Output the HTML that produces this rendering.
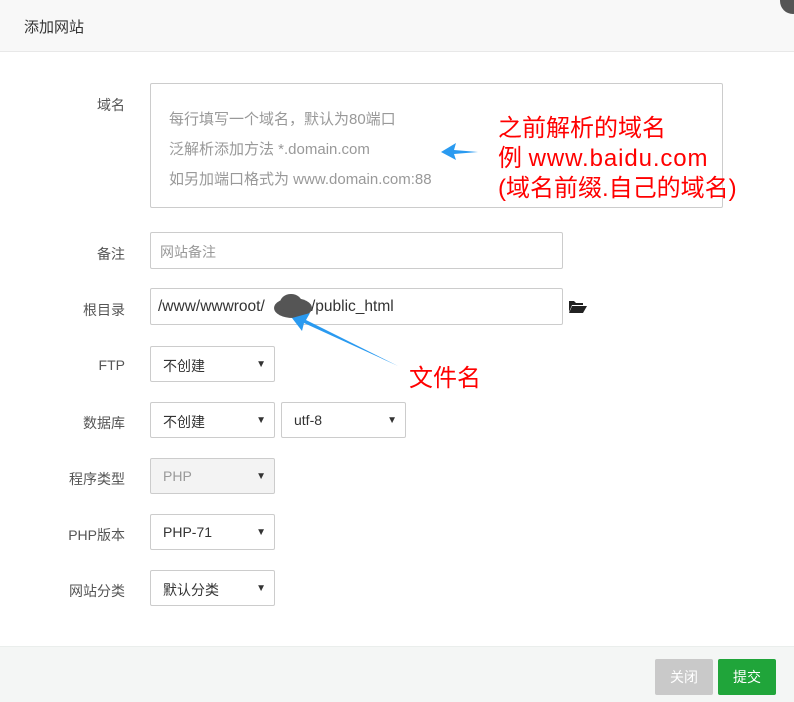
<!DOCTYPE html>
<html><head><meta charset="utf-8"><style>
*{box-sizing:border-box;margin:0;padding:0}
body{width:794px;height:702px;background:#fff;font-family:"Liberation Sans","Noto Sans CJK SC",sans-serif;position:relative;overflow:hidden;color:#333}
.hdr{position:absolute;left:0;top:0;width:794px;height:52px;background:#f8f8f8;border-bottom:1px solid #e8e8e8}
.hdr span{position:absolute;left:24px;top:16px;font-size:15px;color:#333}
.lbl{position:absolute;right:669px;font-size:14px;color:#555;text-align:right}
.box{position:absolute;border:1px solid #ccc;border-radius:2px;background:#fff;font-size:14px}
.sel{position:absolute;border:1px solid #ccc;border-radius:2px;background:#fff;font-size:14px;width:125px;height:36px;padding:9px 12px;color:#333}
.sel:after{content:"▼";position:absolute;right:8px;top:12px;font-size:10px;color:#333}
.ph{color:#999;font-size:15px;position:absolute;left:18px}
.red{position:absolute;color:#f00;font-size:24px;line-height:30px;white-space:nowrap}
.ftr{position:absolute;left:0;top:646px;width:794px;height:56px;background:#f4f6f5;border-top:1px solid #eaeeec}
.btn{position:absolute;top:12px;height:36px;width:58px;border-radius:2px;color:#fff;font-size:14px;text-align:center;line-height:36px}
</style></head><body>
<div class="hdr"><span>添加网站</span></div>
<div style="position:absolute;left:780px;top:-12px;width:26px;height:26px;border-radius:50%;background:#555"></div>

<div class="lbl" style="top:95px">域名</div>
<div class="box" style="left:150px;top:83px;width:573px;height:125px">
<div class="ph" style="top:24px">每行填写一个域名，默认为80端口</div>
<div class="ph" style="top:54px">泛解析添加方法 *.domain.com</div>
<div class="ph" style="top:84px">如另加端口格式为 www.domain.com:88</div>
</div>
<div class="red" style="left:498px;top:114px">之前解析的域名<br>例 <span style="letter-spacing:0.9px">www.baidu.com</span><br>(域名前缀.自己的域名)</div>

<div class="lbl" style="top:244px">备注</div>
<div class="box" style="left:150px;top:232px;width:413px;height:37px"><div class="ph" style="left:9px;top:9px;font-size:14px">网站备注</div></div>

<div class="lbl" style="top:300px">根目录</div>
<div class="box" style="left:150px;top:288px;width:413px;height:37px">
<div style="position:absolute;left:7px;top:9px;font-size:15.5px;color:#333">/www/wwwroot/</div>
<div style="position:absolute;left:160px;top:9px;font-size:15.5px;color:#333">/public_html</div>
</div>
<div style="position:absolute;left:274px;top:298px;width:38px;height:20px;border-radius:50%;background:#555"></div>
<div style="position:absolute;left:280px;top:294px;width:22px;height:18px;border-radius:50%;background:#555"></div>
<svg style="position:absolute;left:568px;top:299px" width="19" height="15" viewBox="0 0 19 15"><path d="M1 2h5l2 2h7v2H4L1 13z" fill="#222"/><path d="M4 7h15l-4 7H1z" fill="#222"/></svg>
<div class="red" style="left:409px;top:364px">文件名</div>

<svg style="position:absolute;left:0;top:0" width="794" height="702">
<path d="M441 152 L456 143 L454 150 L478 152 L454 154 L456 160 Z" fill="#2a9af0"/>
<path d="M292 318 L310 313 L306 320 L398 366 L304 323 L302 331 Z" fill="#2a9af0"/>
</svg>

<div class="lbl" style="top:357px">FTP</div>
<div class="sel" style="left:150px;top:346px">不创建</div>
<div class="lbl" style="top:413px">数据库</div>
<div class="sel" style="left:150px;top:402px">不创建</div>
<div class="sel" style="left:281px;top:402px">utf-8</div>
<div class="lbl" style="top:469px">程序类型</div>
<div class="sel" style="left:150px;top:458px;background:#f3f3f3;color:#999">PHP</div>
<div class="lbl" style="top:525px">PHP版本</div>
<div class="sel" style="left:150px;top:514px">PHP-71</div>
<div class="lbl" style="top:581px">网站分类</div>
<div class="sel" style="left:150px;top:570px">默认分类</div>

<div class="ftr">
<div class="btn" style="left:655px;background:#c9c9c9">关闭</div>
<div class="btn" style="left:718px;background:#20a53a">提交</div>
</div>
</body></html>
